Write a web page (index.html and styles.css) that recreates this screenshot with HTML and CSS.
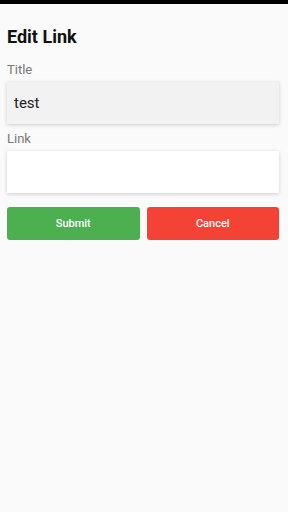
FILE: index.html
```html
<!DOCTYPE html>
<html>
<head>
<meta charset="utf-8">
<link rel="stylesheet" href="styles.css">
</head>
<body>
<div class="topbar"></div>
<main class="page">
  <h1 class="heading">Edit Link</h1>
  <div class="field">
    <label class="label">Title</label>
    <div class="input input-filled">test</div>
  </div>
  <div class="field">
    <label class="label">Link</label>
    <div class="input input-empty"></div>
  </div>
  <div class="actions">
    <button class="btn btn-submit">Submit</button>
    <button class="btn btn-cancel">Cancel</button>
  </div>
</main>
</body>
</html>
```
FILE: styles.css
```css
html, body {
  margin: 0;
  padding: 0;
  background: #fafafa;
  font-family: Roboto, "Liberation Sans", sans-serif;
  width: 288px;
  height: 512px;
  overflow: hidden;
}
.topbar {
  height: 4px;
  background: #000;
}
.page {
  padding: 0 9px 0 7px;
}
.heading {
  margin: 21px 0 0;
  font-size: 18px;
  font-weight: 700;
  color: #111;
  line-height: 24px;
}
.field {
  display: flex;
  flex-direction: column;
}
.label {
  font-size: 13px;
  color: #777;
  line-height: 16px;
  margin-top: 13px;
  margin-bottom: 4px;
}
.field + .field .label {
  margin-top: 7px;
}
.input {
  height: 42px;
  box-shadow: 0 1px 4px rgba(0,0,0,0.18);
  box-sizing: border-box;
  padding: 0 7px;
  display: flex;
  align-items: center;
  font-size: 15px;
  color: #222;
}
.input-filled {
  background: #f2f2f2;
}
.input-empty {
  background: #fff;
}
.actions {
  display: flex;
  gap: 7px;
  margin-top: 14px;
}
.btn {
  flex: 1;
  height: 33px;
  border: none;
  border-radius: 3px;
  color: #fff;
  font-family: Roboto, "Liberation Sans", sans-serif;
  font-size: 11px;
  font-weight: 500;
  padding: 0;
}
.btn-submit {
  background: #4caf50;
}
.btn-cancel {
  background: #f44336;
}
```
